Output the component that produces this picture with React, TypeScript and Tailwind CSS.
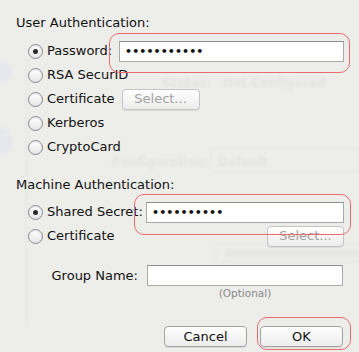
import React from "react";

function Radio({ checked }: { checked?: boolean }) {
  return (
    <span className="w-[15px] h-[15px] shrink-0 rounded-full border border-[#8c8c8c] bg-gradient-to-b from-[#ffffff] to-[#e6e6e6] shadow-[inset_0_1px_1px_rgba(0,0,0,0.12)] flex items-center justify-center">
      {checked && <span className="w-[5px] h-[5px] rounded-full bg-[#2a2a2a]" />}
    </span>
  );
}

function RadioRow({ label, checked, children }: { label: string; checked?: boolean; children?: React.ReactNode }) {
  return (
    <div className="h-[24px] flex items-center pl-[12px]">
      <Radio checked={checked} />
      <span className="ml-[4px] whitespace-nowrap">{label}</span>
      {children}
    </div>
  );
}

function Ring({ className }: { className: string }) {
  return <span className={`absolute rounded-[10px] border-[1.5px] border-[#ec6a6e] pointer-events-none ${className}`} />;
}

function Field({ dots, className }: { dots?: number; className: string }) {
  return (
    <div className={`h-[21px] bg-white border border-[#a9a9a9] border-t-[#8e8e8e] flex items-center pl-[5px] ${className}`}>
      {dots ? <span className="text-[11px] font-bold tracking-[0.1px] leading-none">{"•".repeat(dots)}</span> : null}
    </div>
  );
}

function Button({ label, disabled, className = "" }: { label: string; disabled?: boolean; className?: string }) {
  return (
    <div
      className={`h-[21px] rounded-[4px] border border-[#a3a3a3] bg-gradient-to-b from-[#ffffff] to-[#ececec] shadow-[0_1px_0_rgba(0,0,0,0.08)] flex items-center justify-center ${
        disabled ? "text-[#a2a2a2] border-[#c4c4c4]" : "text-[#111]"
      } ${className}`}
    >
      {label}
    </div>
  );
}

export default function App() {
  return (
    <div
      className="relative w-[359px] h-[352px] overflow-hidden bg-[#ededea] text-[#111] text-[13px]"
      style={{ fontFamily: '"DejaVu Sans", "Liberation Sans", sans-serif' }}
    >
      {/* faint window behind the sheet */}
      <div className="absolute inset-0 pointer-events-none text-[#e3e3df] text-[12px] font-bold blur-[1px]">
        <span className="absolute left-[162px] top-[74px] whitespace-nowrap">Status:&nbsp;&nbsp;&nbsp;Not Configured</span>
        <span className="absolute left-[112px] top-[153px]">Configuration:</span>
        <span className="absolute left-[218px] top-[153px]">Default</span>
        <span className="absolute left-[210px] top-[148px] w-[150px] h-[24px] rounded-[3px] border border-[#e6e6e2]" />
        <span className="absolute left-[215px] top-[243px] w-[150px] h-[20px] rounded-[4px] border border-[#e6e6e2]" />
        <span className="absolute left-[225px] top-[250px] w-[134px] h-[7px] bg-[#e6e6e2]" />
        <span className="absolute left-[25px] top-[56px] w-[3px] h-[272px] bg-[#e8e8e4]" />
        <span className="absolute left-[-8px] top-[62px] w-[20px] h-[20px] rounded-full bg-[#e6e7ec]" />
        <span className="absolute left-[-8px] top-[128px] w-[20px] h-[26px] rounded-full bg-[#e6e7ec]" />
      </div>

      <div className="relative pl-[16px] pr-[15px] pt-[13px]">
        <div className="h-[20px] flex items-center">User Authentication:</div>
        <div className="mt-[6px]">
          <RadioRow label="Password:" checked>
            <div className="relative ml-auto">
              <Field dots={11} className="w-[225px]" />
              <Ring className="-left-[10px] -right-[6px] -top-[8px] -bottom-[11px]" />
            </div>
          </RadioRow>
          <RadioRow label="RSA SecurID" />
          <RadioRow label="Certificate">
            <Button label="Select..." disabled className="w-[78px] h-[20px] ml-[7px]" />
          </RadioRow>
          <RadioRow label="Kerberos" />
          <RadioRow label="CryptoCard" />
        </div>

        <div className="h-[20px] flex items-center mt-[16px]">Machine Authentication:</div>
        <div className="mt-[5px]">
          <RadioRow label="Shared Secret:" checked>
            <div className="relative ml-auto">
              <Field dots={10} className="w-[198px]" />
              <Ring className="-left-[12px] -right-[7px] -top-[8px] -bottom-[12px]" />
            </div>
          </RadioRow>
          <RadioRow label="Certificate">
            <Button label="Select..." disabled className="w-[77px] h-[20px] ml-auto" />
          </RadioRow>
        </div>

        <div className="mt-[17px] flex items-start justify-end pr-[1px]">
          <span className="h-[21px] flex items-center">Group Name:</span>
          <div className="ml-[9px] w-[196px] flex flex-col items-center">
            <Field className="w-[196px]" />
            <span className="mt-[1px] text-[10.5px] text-[#8a8a8a] leading-[13px]">(Optional)</span>
          </div>
        </div>

        <div className="mt-[26px] flex justify-end gap-[13px] pr-[1px]">
          <Button label="Cancel" className="w-[83px]" />
          <div className="relative">
            <Button label="OK" className="w-[83px]" />
            <Ring className="-left-[3px] -right-[8px] -top-[9px] -bottom-[3px]" />
          </div>
        </div>
      </div>
    </div>
  );
}
